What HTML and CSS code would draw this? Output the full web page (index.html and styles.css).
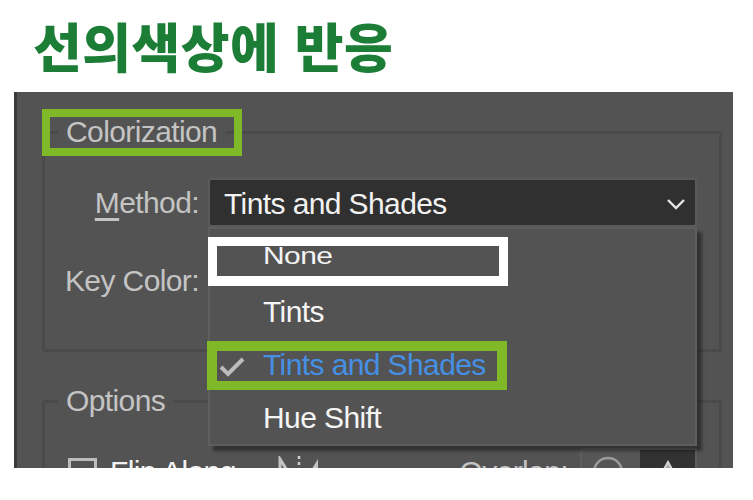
FILE: index.html
```html
<!DOCTYPE html>
<html lang="ko">
<head>
<meta charset="utf-8">
<title>선의색상에 반응</title>
<link rel="stylesheet" href="styles.css">
</head>
<body>
<header class="title-bar"><h1 class="title">선의색상에 반응</h1></header>
<section class="panel">
  <fieldset class="group">
    <legend class="group-legend mark-legend">Colorization</legend>
    <div class="form-grid">
      <label class="field-label"><span class="accesskey">M</span>ethod:</label>
      <div class="method-field">
        <div class="select">
          <span class="select-value">Tints and Shades</span>
          <svg class="chevron" viewBox="0 0 20 12"><polyline points="2,2 10,10 18,2"/></svg>
        </div>
        <ul class="menu">
          <li class="menu-item mark-white"><span class="check-slot"></span><span class="item-text item-squish">None</span></li>
          <li class="menu-item"><span class="check-slot"></span><span class="item-text">Tints</span></li>
          <li class="menu-item menu-item-selected mark-green"><span class="check-slot"><svg class="check" viewBox="0 0 26 20"><polyline points="2,10 9,17 24,2"/></svg></span><span class="item-text">Tints and Shades</span></li>
          <li class="menu-item"><span class="check-slot"></span><span class="item-text">Hue Shift</span></li>
        </ul>
      </div>
      <label class="field-label">Key Color:</label>
      <div class="key-color-field"></div>
    </div>
  </fieldset>
  <fieldset class="group group-options">
    <legend class="group-legend">Options</legend>
    <div class="options-row">
      <span class="checkbox"></span>
      <span class="option-label">Flip Along</span>
      <svg class="flip-icon" viewBox="0 0 44 32">
        <polygon class="flip-outline" points="3,3 3,29 19,29"/>
        <line class="flip-axis" x1="22" y1="0" x2="22" y2="32"/>
        <polygon class="flip-fill" points="41,3 41,29 25,29"/>
      </svg>
      <span class="overlap-label">Overlap:</span>
      <div class="segmented">
        <span class="segment"><svg class="seg-icon" viewBox="0 0 32 32"><circle cx="16" cy="16" r="14"/></svg></span>
        <span class="segment segment-active"><svg class="seg-icon seg-tri" viewBox="0 0 24 24"><polygon points="12,2 22,20 2,20"/></svg></span>
      </div>
    </div>
  </fieldset>
</section>
</body>
</html>
```

FILE: styles.css
```css
body {
  margin: 0;
  background: #ffffff;
  font-family: "Liberation Sans", Arial, sans-serif;
}

.title-bar {
  height: 92px;
  box-sizing: border-box;
  display: flex;
  align-items: center;
  padding-left: 33px;
  padding-bottom: 2px;
}

.title {
  margin: 0;
  font-family: "Noto Sans CJK KR", sans-serif;
  font-weight: 900;
  font-size: 53px;
  line-height: 1;
  letter-spacing: 0.5px;
  color: #1b7d36;
}

.panel {
  margin-left: 14px;
  width: 719px;
  height: 376px;
  box-sizing: border-box;
  border-left: 3px solid #3a3a3a;
  background: #535353;
  overflow: hidden;
  padding: 25px 11px 0 25px;
  font-size: 30px;
  letter-spacing: -0.6px;
  color: #c4c4c4;
}

.group {
  margin: 0;
  min-width: 0;
  padding: 31px 22px 44px 0;
  border: 3px solid #4a4a4a;
  border-radius: 3px;
}

.group-options {
  margin-top: 34px;
  padding-top: 32px;
}

.group-legend {
  margin-left: 13px;
  padding: 0 8px;
  line-height: 30px;
  position: relative;
}

.mark-legend::after {
  content: "";
  position: absolute;
  left: -16px;
  top: -8px;
  width: 200px;
  height: 47px;
  box-sizing: border-box;
  border: 8px solid #80b927;
}

.form-grid {
  display: grid;
  grid-template-columns: 154px 489px;
  grid-auto-rows: 49px;
  column-gap: 9px;
  row-gap: 29px;
  align-items: center;
}

.field-label {
  text-align: right;
  line-height: 30px;
}

.accesskey {
  text-decoration: underline;
  text-decoration-thickness: 3px;
  text-underline-offset: 5px;
}

.method-field {
  position: relative;
  height: 49px;
}

.select {
  height: 49px;
  box-sizing: border-box;
  border: 2px solid #5a5a5a;
  border-radius: 3px;
  background: #303030;
  display: flex;
  align-items: center;
  padding: 2px 9px 0 14px;
  color: #f2f2f2;
  line-height: 30px;
}

.chevron {
  margin-left: auto;
  width: 20px;
  height: 12px;
  fill: none;
  stroke: #e6e6e6;
  stroke-width: 2.4;
}

.menu {
  position: absolute;
  top: 100%;
  left: 0;
  right: 0;
  z-index: 5;
  margin: 0;
  padding: 3px 0 0;
  list-style: none;
  background: #535353;
  border: 2px solid #5e5e5e;
  box-shadow: 5px 5px 3px rgba(0, 0, 0, 0.4);
}

.menu-item {
  position: relative;
  display: flex;
  align-items: center;
  height: 53px;
  line-height: 53px;
  color: #f4f4f4;
}

.check-slot {
  flex: none;
  width: 53px;
  display: flex;
  align-items: center;
}

.check {
  width: 26px;
  height: 20px;
  margin-left: 9px;
  margin-top: 5px;
  fill: none;
  stroke: #bcbcbc;
  stroke-width: 4;
}

.item-squish {
  display: inline-block;
  transform: scaleY(0.78);
  transform-origin: 0 15px;
}

.menu-item-selected {
  color: #4590e4;
}

.mark-white::after,
.mark-green::after {
  content: "";
  position: absolute;
  width: 300px;
  height: 49px;
  box-sizing: border-box;
  pointer-events: none;
}

.mark-white::after {
  left: -2px;
  top: 5px;
  border: 9px solid #ffffff;
  border-bottom-width: 10px;
}

.mark-green::after {
  left: -3px;
  top: 3px;
  border: 10px solid #80b927;
  border-bottom-width: 9px;
}

.options-row {
  display: flex;
  align-items: center;
  height: 48px;
}

.checkbox {
  flex: none;
  width: 29px;
  height: 29px;
  box-sizing: border-box;
  border: 3px solid #bdbdbd;
  margin-left: 23px;
}

.option-label {
  margin-left: 13px;
  line-height: 30px;
  color: #f2f2f2;
}

.flip-icon {
  flex: none;
  margin-left: 41px;
  width: 44px;
  height: 32px;
}

.flip-outline {
  fill: none;
  stroke: #c4c4c4;
  stroke-width: 3;
}

.flip-axis {
  stroke: #d0d0d0;
  stroke-width: 2.5;
  stroke-dasharray: 3 3;
}

.flip-fill {
  fill: #c4c4c4;
}

.overlap-label {
  margin-left: auto;
  margin-right: 12px;
  line-height: 30px;
}

.segmented {
  display: flex;
  height: 48px;
  box-sizing: border-box;
  border: 2px solid #5e5e5e;
  border-radius: 2px;
}

.segment {
  width: 58px;
  display: flex;
  align-items: center;
  padding-left: 10px;
  box-sizing: border-box;
  background: #565656;
}

.segment-active {
  width: 55px;
  padding-left: 0;
  justify-content: center;
  background: #323232;
}

.seg-icon {
  width: 32px;
  height: 32px;
  fill: none;
  stroke: #9b9b9b;
  stroke-width: 2.5;
}

.seg-tri {
  width: 24px;
  height: 24px;
  fill: #a8a8a8;
  stroke: #d6d6d6;
  stroke-width: 2;
}
```
